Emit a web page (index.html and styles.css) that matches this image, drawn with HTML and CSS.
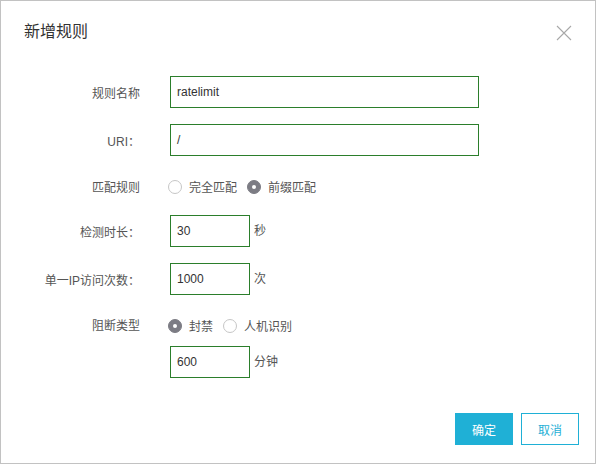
FILE: index.html
```html
<!DOCTYPE html>
<html lang="zh">
<head>
<meta charset="utf-8">
<title>新增规则</title>
<link rel="stylesheet" href="styles.css">
</head>
<body>
<div class="dialog">
  <div class="header">
    <div class="title">新增规则</div>
    <button class="close" aria-label="关闭">
      <svg width="16" height="16" viewBox="0 0 16 16"><path d="M1 1 L15 15 M15 1 L1 15" stroke="#a8a8a8" stroke-width="1.1" fill="none"/></svg>
    </button>
  </div>
  <div class="form">
    <div class="row">
      <div class="label">规则名称</div>
      <div class="field"><div class="input wide">ratelimit</div></div>
    </div>
    <div class="row">
      <div class="label">URI：</div>
      <div class="field"><div class="input wide">/</div></div>
    </div>
    <div class="row short">
      <div class="label">匹配规则</div>
      <div class="field radios">
        <span class="radio"></span><span class="rtext">完全匹配</span>
        <span class="radio checked"></span><span class="rtext">前缀匹配</span>
      </div>
    </div>
    <div class="row">
      <div class="label">检测时长：</div>
      <div class="field"><div class="input small">30</div><span class="unit">秒</span></div>
    </div>
    <div class="row">
      <div class="label">单一IP访问次数：</div>
      <div class="field"><div class="input small">1000</div><span class="unit">次</span></div>
    </div>
    <div class="row block">
      <div class="label short-label">阻断类型</div>
      <div class="stack">
        <div class="field radios short">
          <span class="radio checked"></span><span class="rtext">封禁</span>
          <span class="radio"></span><span class="rtext">人机识别</span>
        </div>
        <div class="field"><div class="input small">600</div><span class="unit">分钟</span></div>
      </div>
    </div>
  </div>
  <div class="footer">
    <button class="btn primary">确定</button>
    <button class="btn secondary">取消</button>
  </div>
</div>
</body>
</html>
```

FILE: styles.css
```css
html, body {
  margin: 0;
  padding: 0;
  background: #ffffff;
}
body {
  font-family: "Liberation Sans", "Noto Sans CJK SC", sans-serif;
  color: #333333;
}
.dialog {
  width: 596px;
  height: 464px;
  box-sizing: border-box;
  border: 1px solid #c2c2c2;
  background: #ffffff;
  display: flex;
  flex-direction: column;
}
.header {
  display: flex;
  align-items: center;
  justify-content: space-between;
  padding: 20px 23px 0 23px;
  height: 22px;
}
.title {
  font-size: 16px;
  line-height: 22px;
  color: #333333;
}
.close {
  border: 0;
  background: transparent;
  padding: 0;
  width: 16px;
  height: 16px;
  display: block;
  margin-top: 2px;
}
.close svg { display: block; }
.form {
  margin-top: 33px;
  display: flex;
  flex-direction: column;
  gap: 16px;
}
.row {
  display: flex;
  align-items: center;
  height: 32px;
}
.row.short {
  height: 27px;
  box-sizing: border-box;
  padding-top: 2px;
}
.row.block {
  height: auto;
  align-items: flex-start;
}
.label {
  width: 139px;
  text-align: right;
  font-size: 12px;
  color: #555555;
  margin-right: 30px;
  flex-shrink: 0;
  white-space: nowrap;
}
.short-label {
  line-height: 27px;
  padding-top: 2px;
}
.stack {
  display: flex;
  flex-direction: column;
  gap: 8px;
}
.field {
  display: flex;
  align-items: center;
  height: 32px;
}
.field.short {
  height: 27px;
  box-sizing: border-box;
  padding-top: 2px;
}
.input {
  box-sizing: border-box;
  height: 32px;
  border: 1px solid #2b7e2b;
  font-size: 12px;
  line-height: 30px;
  padding: 0 6px;
  color: #333333;
}
.input.wide { width: 309px; }
.input.small { width: 80px; }
.unit {
  font-size: 12px;
  color: #555555;
  margin-left: 4px;
  margin-top: -3px;
}
.radios {
  margin-left: -2px;
}
.radio {
  box-sizing: border-box;
  width: 14px;
  height: 14px;
  border-radius: 50%;
  border: 1px solid #c6c6c6;
  background: #ffffff;
  position: relative;
  flex-shrink: 0;
}
.radio.checked {
  border-color: #7c7c84;
  background: #7c7c84;
}
.radio.checked::after {
  content: "";
  position: absolute;
  left: 4px;
  top: 4px;
  width: 4px;
  height: 4px;
  border-radius: 50%;
  background: #ffffff;
}
.rtext {
  font-size: 12px;
  color: #555555;
  margin-left: 7px;
  margin-right: 10px;
}
.footer {
  margin-top: auto;
  display: flex;
  justify-content: flex-end;
  gap: 8px;
  padding: 0 16px 18px 0;
}
.btn {
  box-sizing: border-box;
  width: 58px;
  height: 32px;
  font-family: "Liberation Sans", "Noto Sans CJK SC", sans-serif;
  font-size: 12px;
  padding: 0;
  cursor: pointer;
}
.btn.primary {
  background: #1fb0d6;
  border: 1px solid #1fb0d6;
  color: #ffffff;
}
.btn.secondary {
  background: #ffffff;
  border: 1px solid #1fb0d6;
  color: #1fb0d6;
}
```
